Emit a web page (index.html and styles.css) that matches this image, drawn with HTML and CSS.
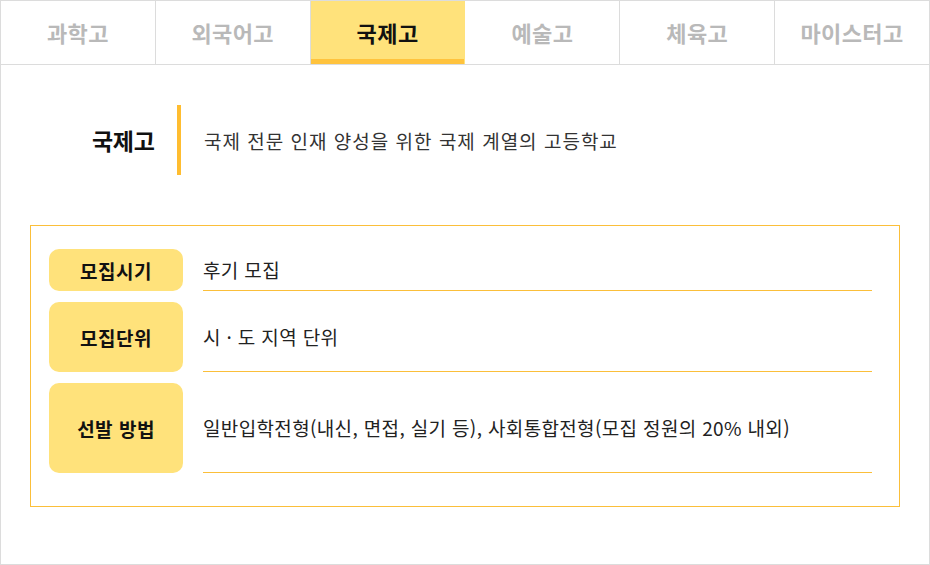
FILE: index.html
```html
<!DOCTYPE html>
<html lang="ko">
<head>
<meta charset="utf-8">
<title>국제고</title>
<link rel="stylesheet" href="styles.css">
</head>
<body>
<div class="wrap">
  <nav class="tabs">
    <div class="tab">과학고</div>
    <div class="tab">외국어고</div>
    <div class="tab active">국제고</div>
    <div class="tab">예술고</div>
    <div class="tab">체육고</div>
    <div class="tab">마이스터고</div>
  </nav>
  <section class="content">
    <div class="intro">
      <h2 class="intro-title">국제고</h2>
      <span class="intro-bar"></span>
      <p class="intro-desc">국제 전문 인재 양성을 위한 국제 계열의 고등학교</p>
    </div>
    <div class="info">
      <div class="row row-s">
        <div class="label">모집시기</div>
        <div class="value">후기 모집</div>
      </div>
      <div class="row row-m">
        <div class="label">모집단위</div>
        <div class="value">시 · 도 지역 단위</div>
      </div>
      <div class="row row-l">
        <div class="label">선발 방법</div>
        <div class="value">일반입학전형(내신, 면접, 실기 등), 사회통합전형(모집 정원의 20% 내외)</div>
      </div>
    </div>
  </section>
</div>
</body>
</html>
```
FILE: styles.css
```css
* { box-sizing: border-box; }
html, body { margin: 0; padding: 0; background: #fff; }
body {
  font-family: "Noto Sans CJK KR", "Noto Sans", sans-serif;
  color: #222;
}
.wrap {
  width: 930px;
  height: 565px;
  border: 1px solid #dcdcdc;
}
.tabs {
  display: flex;
  height: 64px;
  border-bottom: 1px solid #dcdcdc;
}
.tab {
  flex: 1;
  display: flex;
  align-items: center;
  justify-content: center;
  border-right: 1px solid #dcdcdc;
  font-size: 22px;
  font-weight: 700;
  color: #b9b9b9;
  letter-spacing: 0.4px;
  padding-bottom: 1px;
}
.tab:last-child { border-right: none; }
.tab.active {
  background: #ffe27b;
  color: #111;
  border-right-color: #ffe27b;
  box-shadow: inset 0 -5px 0 #ffc33d;
}
.content {
  padding: 40px 29px 0 29px;
}
.intro {
  display: flex;
  align-items: center;
  height: 70px;
  padding-left: 62px;
}
.intro-title {
  margin: 0;
  font-size: 23px;
  font-weight: 700;
  color: #111;
  letter-spacing: -0.3px;
  width: 85px;
}
.intro-bar {
  width: 4px;
  height: 70px;
  background: #ffbd30;
}
.intro-desc {
  margin: 0 0 0 23px;
  font-size: 19px;
  letter-spacing: 1px;
  color: #333;
}
.info {
  margin-top: 50px;
  border: 1px solid #fbbf3a;
  padding: 23px 27px 33px 18px;
  display: flex;
  flex-direction: column;
  gap: 11px;
}
.row {
  display: flex;
  gap: 20px;
}
.row-s { height: 42px; }
.row-m { height: 70px; }
.row-l { height: 90px; }
.label {
  width: 134px;
  flex: none;
  background: #ffe27b;
  border-radius: 10px;
  display: flex;
  align-items: center;
  justify-content: center;
  font-size: 19px;
  font-weight: 700;
  color: #111;
  letter-spacing: 0.5px;
}
.value {
  flex: 1;
  display: flex;
  align-items: center;
  border-bottom: 1px solid #fbbf3a;
  font-size: 19px;
  letter-spacing: 0.35px;
  color: #222;
}
```
